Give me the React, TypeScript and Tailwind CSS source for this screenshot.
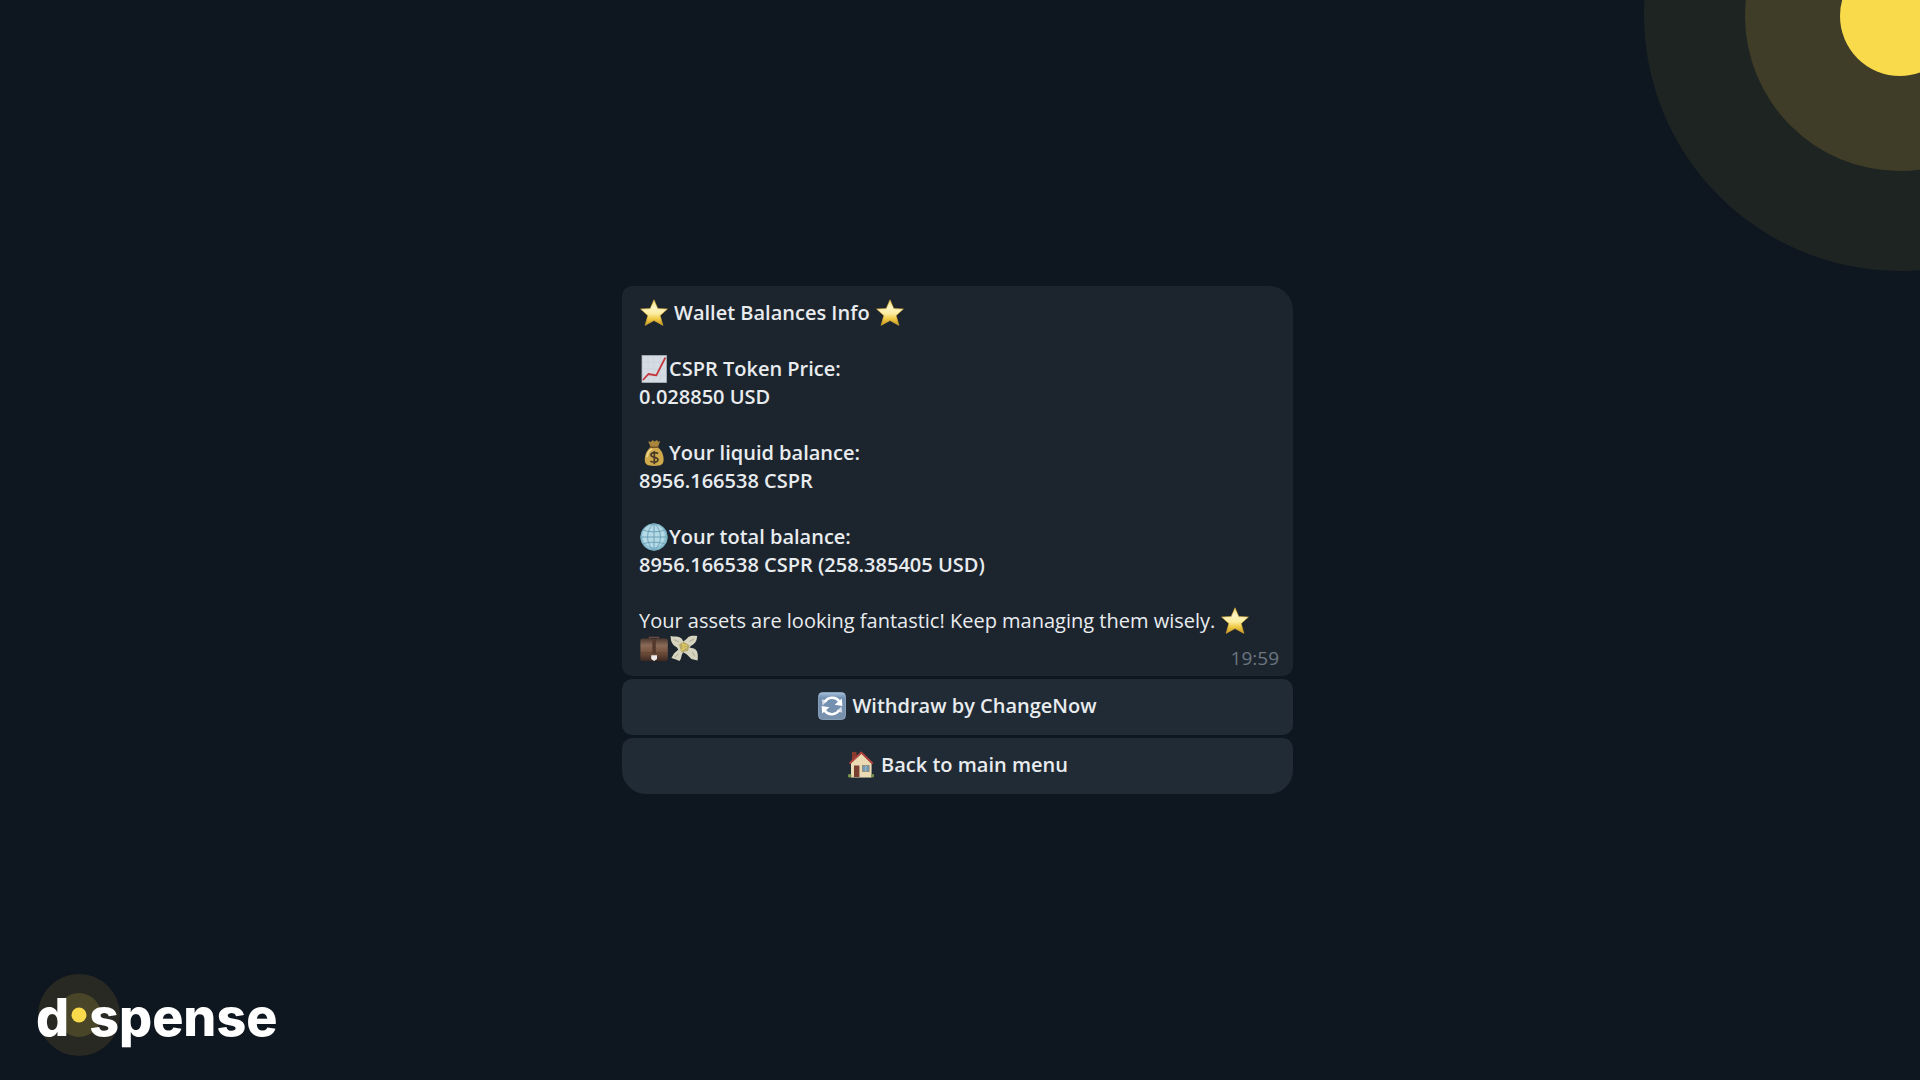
import type { ReactNode } from "react";

function Icon({ children, className = "" }: { children: ReactNode; className?: string }) {
  return (
    <svg viewBox="0 0 28 28" aria-hidden="true" className={`inline-block size-7 shrink-0 align-middle ${className}`}>
      {children}
    </svg>
  );
}

function Star({ className = "" }: { className?: string }) {
  return (
    <Icon className={className}>
      <defs>
        <linearGradient id="star" x1="0" y1="0" x2="0" y2="1">
          <stop offset="0" stopColor="#f3dc7c" />
          <stop offset="0.3" stopColor="#fdf5c4" />
          <stop offset="0.55" stopColor="#fbeb9c" />
          <stop offset="0.75" stopColor="#efc944" />
          <stop offset="1" stopColor="#c8921f" />
        </linearGradient>
      </defs>
      <path
        d="M14 .8 17.8 9.6 27.4 10 20.2 16.6 22.9 26.4 14 21.6 5.1 26.4 7.8 16.6.6 10 10.2 9.6Z"
        fill="url(#star)"
        stroke="#d9ab35"
        strokeWidth=".6"
        strokeLinejoin="round"
      />
    </Icon>
  );
}

function Chart() {
  return (
    <Icon className="mx-px">
      <rect x="2" y=".5" width="24.5" height="27" fill="#d5dce3" stroke="#a7b0b9" strokeWidth=".8" />
      <path d="M2 7.2H26.5M2 14H26.5M2 20.8H26.5M8 .5V27.5M14 .5V27.5M20 .5V27.5" stroke="#c9d2da" strokeWidth=".6" />
      <path d="M3 25 8.4 19 16.3 20.4 25.3 2.6" fill="none" stroke="#c4343a" strokeWidth="1.8" strokeLinejoin="round" />
    </Icon>
  );
}

function MoneyBag() {
  return (
    <Icon className="mx-px">
      <path d="M8.2 2.2 11 3 12.5 1 14.5 2.6 17 .9 18 2.8 20.2 2 17.8 8.2H10.8Z" fill="#a9863c" />
      <path d="M10.6 8.5C7 11 4.8 15.6 4.8 20.6 4.8 25.4 7 27 14.2 27S23.6 25.4 23.6 20.6C23.6 15.6 21.4 11 17.9 8.5Z" fill="#cfa94c" />
      <path d="M7 18C7.6 14 9.5 11 12 10" fill="none" stroke="#ecd68b" strokeWidth="1.8" />
      <path d="M10.2 8.3H18.2" stroke="#765627" strokeWidth="1.6" strokeLinecap="round" />
      <path d="M18 14.6C17 13.4 11 12.7 10.9 16 10.9 19 18 17.4 18 20.8 17.8 24 11.5 23.6 10.5 21.8M14.3 12V25.3" fill="none" stroke="#493b27" strokeWidth="1.7" />
    </Icon>
  );
}

function Globe() {
  return (
    <Icon className="mx-px">
      <circle cx="14" cy="14" r="13.5" fill="#8dc0d3" />
      <circle cx="13.5" cy="13" r="11.2" fill="#b5d9e5" />
      <path d="M14 .5V27.5M.5 14H27.5M3 7C9 9.4 19 9.4 25 7M3 21C9 18.6 19 18.6 25 21M14 .5C5.5 7 5.5 21 14 27.5M14 .5C22.5 7 22.5 21 14 27.5" fill="none" stroke="#6fa3ba" strokeWidth="1" />
      <circle cx="14" cy="14" r="13.2" fill="none" stroke="#73aabd" strokeWidth=".7" />
    </Icon>
  );
}

function Briefcase() {
  return (
    <Icon className="mx-px">
      <defs>
        <linearGradient id="leather" x1="0" y1="0" x2="0" y2="1">
          <stop offset="0" stopColor="#4d382f" />
          <stop offset=".3" stopColor="#8a6a57" />
          <stop offset=".6" stopColor="#76533f" />
          <stop offset="1" stopColor="#3d2821" />
        </linearGradient>
      </defs>
      <path d="M9.5 4V2.4H18.5V4" fill="none" stroke="#6b4c40" strokeWidth="1.4" />
      <rect x=".4" y="3.5" width="27.4" height="22.5" rx="2" fill="url(#leather)" />
      <path d="M1 17.8H27" stroke="#5b3f31" strokeWidth=".7" />
      <rect x="12.4" y="4.5" width="3.4" height="14" fill="#53382b" />
      <path d="M11.2 20.3H17V24L14.1 26 11.2 24Z" fill="#eeeceb" />
    </Icon>
  );
}

function FlyingMoney() {
  return (
    <Icon className="mx-px">
      <path d="M.6 1C4 2.2 8.6.6 11.6 3.6L13.4 6.6 17 3.4C19 .8 23 .6 27.2 1 26.8 5.4 25.6 8.6 21.4 10.4L19.4 12.4 24 13.4C28 15.4 28.2 19.6 27.6 25.4L21.4 24 16.6 19.2 13 17.2 11.8 20C11.2 22.4 11 24.6 9.4 26L6 24.4 1.4 23 4 18.4 8.4 14.6 6.4 12C2.4 10 .6 6.6.6 1Z" fill="#d6d3bf" />
      <path d="M9 9.6 13.5 6.8 19.4 10.2 18 16 11.2 17.2Z" fill="#b9a968" />
      <path d="M12 9 17 10.8M11 15.5 16.5 12M13.2 9V15" stroke="#dfc95f" strokeWidth="1.4" />
      <path d="M4 4.6 9 7M24 4 19.4 6.4M22.4 17 24.8 21.4M8.4 19 5 22" stroke="#a5a18c" strokeWidth=".9" />
    </Icon>
  );
}

function Refresh() {
  return (
    <Icon className="mr-1.5">
      <defs>
        <linearGradient id="refresh" x1="0" y1="0" x2="0" y2="1">
          <stop offset="0" stopColor="#a5c1dc" />
          <stop offset=".2" stopColor="#7391b3" />
          <stop offset="1" stopColor="#7890ab" />
        </linearGradient>
      </defs>
      <rect x=".5" y=".5" width="27" height="27" rx="4" fill="url(#refresh)" stroke="#96afc7" strokeWidth=".8" />
      <path d="M7 9.8C9.8 4.8 17.6 4.4 21.2 9.2M21 18.2C18.2 23.2 10.4 23.6 6.8 18.8" fill="none" stroke="#fff" strokeWidth="2.6" />
      <path d="M16.6 12.8 24.4 14 23.8 6.4ZM11.4 15.2 3.6 14 4.2 21.6Z" fill="#fff" />
      <path d="M3.8 7.6 9.6 8.6 4.6 13.4ZM24.2 20.4 18.4 19.4 23.4 14.6Z" fill="#fff" opacity=".7" />
    </Icon>
  );
}

function House() {
  return (
    <Icon className="mr-1.5">
      <path d="M1 23.5H27V26.2H1Z" fill="#64803f" />
      <path d="M5 1H9.5V10H5Z" fill="#8b3a30" />
      <path d="M4 12 14.4 2.4 24.6 12.5V26.5H4Z" fill="#eadbb4" />
      <path d="M2.6 12.4 14.4 1.6 25.8 12.6" fill="none" stroke="#b0423b" strokeWidth="2" strokeLinejoin="round" />
      <rect x="7" y="14.5" width="5.4" height="11.5" fill="#793f30" />
      <rect x="15.5" y="14.5" width="6.6" height="6" fill="#719cb8" stroke="#8d836b" strokeWidth=".8" />
      <path d="M18.8 14.5V20.5" stroke="#b8c7cf" strokeWidth=".7" />
      <circle cx="2.8" cy="24.7" r="1.8" fill="#79914e" />
      <circle cx="25.5" cy="24.7" r="1.6" fill="#79914e" />
    </Icon>
  );
}

function Balance({ icon, label, value }: { icon: ReactNode; label: string; value: string }) {
  return (
    <div className="font-semibold">
      <h2 className="flex h-7 items-center">
        {icon}
        {label}
      </h2>
      <p>{value}</p>
    </div>
  );
}

function Logo() {
  return (
    <div className="absolute bottom-[30px] left-9 flex items-center font-['Inter',sans-serif] text-[52px] leading-[64px] font-extrabold text-white">
      <svg viewBox="0 0 82 82" aria-hidden="true" className="absolute -top-3 left-0.5 size-[82px]">
        <circle cx="41" cy="41" r="41" fill="#282922" />
        <circle cx="41" cy="41" r="22" fill="#494528" />
        <circle cx="41" cy="41" r="7.5" fill="#f8da4b" />
      </svg>
      <span className="relative">d</span>
      <span className="relative ml-5">spense</span>
    </div>
  );
}

export default function App() {
  return (
    <main className="relative flex min-h-screen items-center justify-center overflow-hidden bg-[#0e161f] font-['Open_Sans',sans-serif] text-xl leading-7 text-[#e9ecee]">
      <svg viewBox="0 0 276 271" aria-hidden="true" className="absolute top-0 right-0 h-[271px] w-[276px]">
        <circle cx="256" cy="15" r="256" fill="#1e2422" />
        <circle cx="256" cy="16" r="155" fill="#3f3d28" />
        <circle cx="256" cy="16" r="60" fill="#f8da4b" />
      </svg>

      <section className="mr-[5px] flex w-full max-w-[671px] flex-col gap-[3px]">
        <article className="relative flex flex-col gap-7 rounded-[10px] rounded-tr-3xl bg-[#1c252e] px-[17px] py-[13px]">
          <h1 className="flex h-7 items-center font-semibold">
            <Star className="mr-1.5 ml-px" />
            Wallet Balances Info
            <Star className="ml-1.5" />
          </h1>
          <Balance icon={<Chart />} label="CSPR Token Price:" value="0.028850 USD" />
          <Balance icon={<MoneyBag />} label="Your liquid balance:" value="8956.166538 CSPR" />
          <Balance icon={<Globe />} label="Your total balance:" value="8956.166538 CSPR (258.385405 USD)" />
          <div>
            <p className="flex h-7 items-center">
              Your assets are looking fantastic! Keep managing them wisely.
              <Star className="ml-1.5" />
            </p>
            <p className="flex h-7 items-center">
              <Briefcase />
              <FlyingMoney />
            </p>
          </div>
          <time className="absolute right-3.5 bottom-1 text-[19px] text-[#6b7681]">19:59</time>
        </article>
        <button type="button" className="flex h-14 items-center justify-center rounded-[10px] bg-[#202b36] pb-0.5 font-semibold">
          <Refresh />
          Withdraw by ChangeNow
        </button>
        <button type="button" className="flex h-14 items-center justify-center rounded-[10px] rounded-b-3xl bg-[#202b36] pb-0.5 font-semibold">
          <House />
          Back to main menu
        </button>
      </section>

      <Logo />
    </main>
  );
}
